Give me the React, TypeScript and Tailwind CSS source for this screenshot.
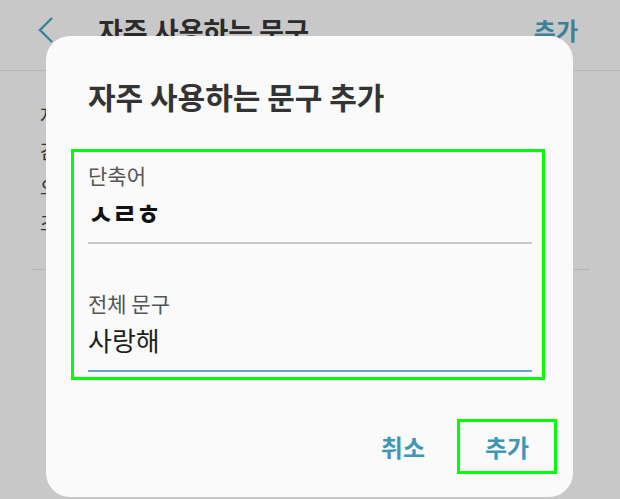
const font = "font-['Noto_Sans_CJK_KR','Noto_Sans',sans-serif]";

const listRows = ["자주 쓰는 말", "감사합니다", "오늘 늦어요", "조금 있다가 연락할게요"];

export default function App() {
  return (
    <div className={`relative w-[620px] h-[499px] overflow-hidden bg-[#c8c8c8] ${font}`}>
      {/* page behind the dialog */}
      <div className="flex items-center h-[71px] border-b border-[#b6b6b6] pl-[36px] pr-[42px]">
        <svg width="20" height="28" viewBox="0 0 20 28" className="mt-[-10px]">
          <path d="M16 2 L4 14 L16 26" fill="none" stroke="#3b8199" strokeWidth="2.4" />
        </svg>
        <span className="ml-[42px] mt-[-10px] text-[27px] leading-[27px] font-bold text-[#2b2b2b]">
          자주 사용하는 문구
        </span>
        <span className="ml-auto mt-[-10px] text-[24px] leading-[24px] font-bold text-[#3b8199]">추가</span>
      </div>
      <div className="px-[40px] pt-[30px]">
        {listRows.map((row, i) => (
          <div key={i} className="h-[36px] text-[19px] text-[#333]">
            {row}
          </div>
        ))}
      </div>
      <div className="mx-[32px] mt-[24px] mr-[30px] border-t border-[#b6b6b6]" />

      {/* DIALOG */}
      <div className="absolute left-[46px] top-[36px] w-[527px] h-[461px] rounded-[24px] bg-[#fafafa] pt-[45px]">
        <h2 className="pl-[42px] text-[30px] leading-[30px] font-bold text-[#333]">자주 사용하는 문구 추가</h2>

        <div className="mt-[38px] ml-[25px] mr-[28px] border-[3px] border-[#00ff00] pl-[14px] pr-[10px] pt-[12px] pb-[5px]">
          <div className="text-[21px] leading-[22px] text-[#555]">단축어</div>
          <div className="mt-[12px] text-[28px] leading-[30px] font-bold tracking-[-2px] text-[#111]">ㅅㄹㅎ</div>
          <div className="mt-[14px] h-[2px] bg-[#c6c6c6]" />

          <div className="mt-[48px] text-[21px] leading-[22px] text-[#555]">전체 문구</div>
          <div className="mt-[10px] text-[26px] leading-[32px] text-[#1e1e1e]">사랑해</div>
          <div className="mt-[14px] h-[2px] bg-[#5aa9cb]" />
        </div>

        <div className="flex justify-end items-center mt-[39px] pr-[16px]">
          <span className="text-[24px] leading-[24px] font-bold text-[#3f97b6] mr-[32px]">취소</span>
          <div className="flex items-center justify-center w-[100px] h-[55px] border-[3px] border-[#00ff00]">
            <span className="text-[24px] leading-[24px] font-bold text-[#3f97b6]">추가</span>
          </div>
        </div>
      </div>
    </div>
  );
}
